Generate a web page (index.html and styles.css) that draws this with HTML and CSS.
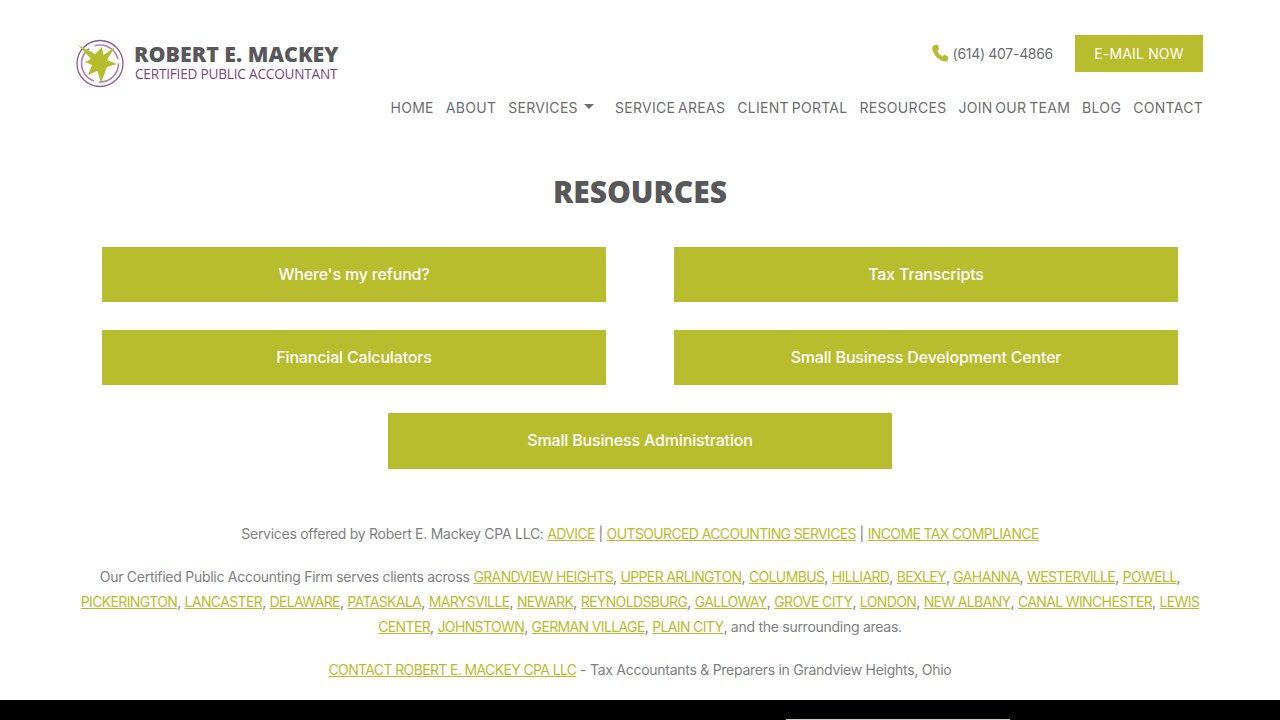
FILE: index.html
```html
<!DOCTYPE html>
<html lang="en">
<head>
<meta charset="utf-8">
<title>Resources | Robert E. Mackey CPA</title>
<link rel="stylesheet" href="styles.css">
</head>
<body>
<header class="site-header">
  <a class="logo" href="#">
    <svg class="logo-mark" viewBox="0 0 50 50" width="50" height="50" aria-hidden="true">
      <circle cx="24" cy="25.500" r="23" fill="none" stroke="#8d5a97" stroke-width="1.300"/>
      <circle cx="24" cy="25.500" r="18.500" fill="none" stroke="#a884ae" stroke-width="1.600" stroke-dasharray="30 5 40 6"/>
      <path d="M2 7 L19 16 L26 9 L27.500 17 L39 9 L31 22 L41 26 L31 29 L25 45 L21.500 33 L12 37 L16 27 L9 24 L15 21 Z" fill="#b5bd2d"/>
    </svg>
    <span class="logo-text">
      <span class="logo-name">ROBERT E. MACKEY</span>
      <span class="logo-sub">CERTIFIED PUBLIC ACCOUNTANT</span>
    </span>
  </a>
  <div class="header-right">
    <div class="contact-row">
      <a class="phone" href="#">
        <svg viewBox="0 0 24 24" width="18" height="18" aria-hidden="true"><path fill="#b5bd2d" d="M5.200 1.200 8.600 0.600 11 6.600 8.400 8.800C9.400 12 12 15 15.400 16.600L17.600 14.200 23.200 17 22.400 20.600C22 22.600 20.200 23.600 18 23.200 9.600 21.600 2.600 13.600 1.600 6 1.300 3.600 3 1.700 5.200 1.200Z"/></svg>
        <span>(614) 407-4866</span>
      </a>
      <a class="email-btn" href="#">E-MAIL NOW</a>
    </div>
    <nav class="main-nav">
      <a href="#">HOME</a>
      <a href="#">ABOUT</a>
      <a href="#" class="has-caret">SERVICES<i class="caret"></i></a>
      <a href="#">SERVICE AREAS</a>
      <a href="#">CLIENT PORTAL</a>
      <a href="#">RESOURCES</a>
      <a href="#">JOIN OUR TEAM</a>
      <a href="#">BLOG</a>
      <a href="#">CONTACT</a>
    </nav>
  </div>
</header>

<main class="content">
  <h1>RESOURCES</h1>
  <div class="resource-grid">
    <a class="res-btn" href="#">Where's my refund?</a>
    <a class="res-btn" href="#">Tax Transcripts</a>
    <a class="res-btn" href="#">Financial Calculators</a>
    <a class="res-btn" href="#">Small Business Development Center</a>
    <a class="res-btn res-last" href="#">Small Business Administration</a>
  </div>
  <section class="seo">
    <p>Services offered by Robert E. Mackey CPA LLC: <a href="#">ADVICE</a> | <a href="#">OUTSOURCED ACCOUNTING SERVICES</a> | <a href="#">INCOME TAX COMPLIANCE</a></p>
    <p>Our Certified Public Accounting Firm serves clients across <a href="#">GRANDVIEW HEIGHTS</a>, <a href="#">UPPER ARLINGTON</a>, <a href="#">COLUMBUS</a>, <a href="#">HILLIARD</a>, <a href="#">BEXLEY</a>, <a href="#">GAHANNA</a>, <a href="#">WESTERVILLE</a>, <a href="#">POWELL</a>, <a href="#">PICKERINGTON</a>, <a href="#">LANCASTER</a>, <a href="#">DELAWARE</a>, <a href="#">PATASKALA</a>, <a href="#">MARYSVILLE</a>, <a href="#">NEWARK</a>, <a href="#">REYNOLDSBURG</a>, <a href="#">GALLOWAY</a>, <a href="#">GROVE CITY</a>, <a href="#">LONDON</a>, <a href="#">NEW ALBANY</a>, <a href="#">CANAL WINCHESTER</a>, <a href="#">LEWIS CENTER</a>, <a href="#">JOHNSTOWN</a>, <a href="#">GERMAN VILLAGE</a>, <a href="#">PLAIN CITY</a>, and the surrounding areas.</p>
    <p><a href="#">CONTACT ROBERT E. MACKEY CPA LLC</a> - Tax Accountants &amp; Preparers in Grandview Heights, Ohio</p>
  </section>
</main>

<footer class="site-footer"><div class="footer-box"></div></footer>
</body>
</html>
```

FILE: styles.css
```css
* { box-sizing: border-box; }
html, body { margin: 0; padding: 0; }
body {
  height: 720px;
  overflow: hidden;
  background: #fff;
  color: #808083;
  font-family: Inter, "Noto Sans", sans-serif;
  font-size: 14px;
}
a { text-decoration: none; color: inherit; }

.site-header {
  display: flex;
  justify-content: space-between;
  padding: 35px 77px 0 76px;
  height: 137px;
}
.logo { display: flex; align-items: flex-start; gap: 8px; height: 58px; padding-top: 3px; }
.logo-mark { flex: none; }
.logo-text { display: flex; flex-direction: column; padding-top: 3px; }
.logo-name {
  font-family: "Open Sans", sans-serif;
  font-weight: 800;
  font-size: 21.4px;
  line-height: 25px;
  color: #58585a;
  white-space: nowrap;
}
.logo-sub {
  font-family: "Open Sans", sans-serif;
  font-size: 13.6px;
  line-height: 15px;
  color: #7b3f86;
  white-space: nowrap;
  margin-left: 1px;
  letter-spacing: -0.2px;
}

.header-right { display: flex; flex-direction: column; align-items: flex-end; }
.contact-row { display: flex; align-items: center; gap: 22px; height: 37px; }
.phone { display: flex; align-items: center; gap: 4px; padding-bottom: 1px; color: #6d6d6f; font-size: 14px; letter-spacing: -0.3px; }
.email-btn {
  display: flex;
  align-items: center;
  justify-content: center;
  width: 128px;
  height: 37px;
  padding-bottom: 1px;
  background: #b7bd2d;
  color: #fff;
  font-size: 14px;
  letter-spacing: 0.15px;
}
.main-nav {
  display: flex;
  gap: 12px;
  margin-top: 27px;
  color: #6d6d6f;
  font-size: 14px;
  line-height: 18px;
  letter-spacing: 0.3px;
  word-spacing: -1.5px;
}
.has-caret { display: flex; align-items: flex-start; margin-right: 9px; }
.caret {
  width: 0;
  height: 0;
  margin: 5px 0 0 6px;
  border-left: 5px solid transparent;
  border-right: 5px solid transparent;
  border-top: 5px solid #6d6d6f;
}

.content { padding: 0 77px; }
h1 {
  margin: 0;
  height: 110px;
  text-align: center;
  font-family: "Open Sans", sans-serif;
  font-weight: 800;
  font-size: 30px;
  line-height: 110px;
  color: #58585a;
}
.resource-grid {
  display: grid;
  grid-template-columns: 504px 504px;
  justify-content: center;
  column-gap: 68px;
  row-gap: 28px;
}
.res-btn {
  display: flex;
  align-items: center;
  justify-content: center;
  height: 55px;
  padding-bottom: 2px;
  background: #b7bd2d;
  color: #fff;
  font-size: 16px;
  font-weight: 500;
  letter-spacing: -0.17px;
}
.res-last { grid-column: 1 / -1; justify-self: center; width: 504px; height: 56px; }

.seo { margin: 52px 0 0; text-align: center; font-size: 14px; line-height: 25px; letter-spacing: -0.27px; }
.seo p { margin: 0 0 18px; }
.seo a { color: #b7bd2d; text-decoration: underline; letter-spacing: -0.63px; }

.site-footer {
  position: fixed;
  left: 0;
  right: 0;
  top: 700px;
  height: 20px;
  background: #000;
  display: flex;
  padding: 19px 0 0 786px;
}
.footer-box { width: 224px; height: 1px; background: #c9d6a0; }
```
